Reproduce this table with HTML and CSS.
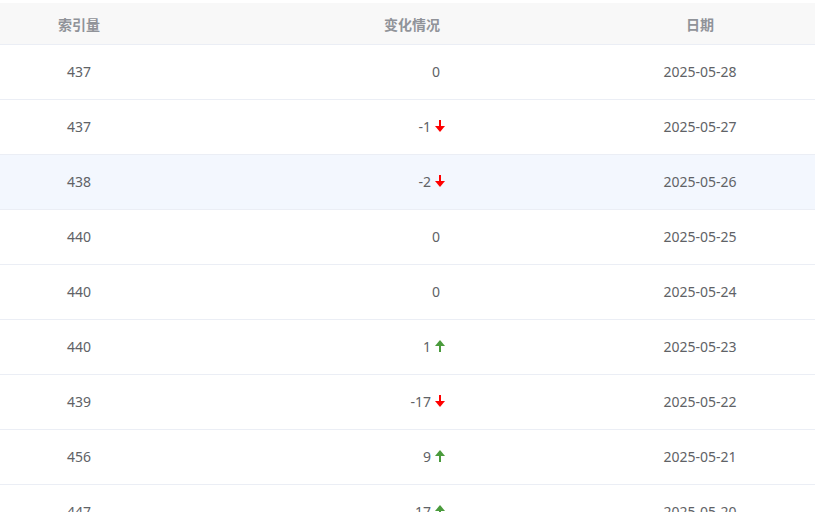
FILE: index.html
```html
<!DOCTYPE html>
<html>
<head>
    <title>索引量记录</title>
    <link rel="stylesheet" href="styles.css">
</head>
<body>
    <div class="table">
        <div class="row head">
            <div class="cell c1">索引量</div>
            <div class="cell c2">变化情况</div>
            <div class="cell c3">日期</div>
        </div>

        <div class="row">
            <div class="cell c1">437</div>
            <div class="cell c2"><span class="zero">0</span></div>
            <div class="cell c3">2025-05-28</div>
        </div>
        <div class="row">
            <div class="cell c1">437</div>
            <div class="cell c2">-1 <svg class="arrow down" viewBox="0 0 10 12"><path d="M5 0v7"/><polygon points="0,6 10,6 5,12"/></svg></div>
            <div class="cell c3">2025-05-27</div>
        </div>
        <div class="row hover">
            <div class="cell c1">438</div>
            <div class="cell c2">-2 <svg class="arrow down" viewBox="0 0 10 12"><path d="M5 0v7"/><polygon points="0,6 10,6 5,12"/></svg></div>
            <div class="cell c3">2025-05-26</div>
        </div>
        <div class="row">
            <div class="cell c1">440</div>
            <div class="cell c2"><span class="zero">0</span></div>
            <div class="cell c3">2025-05-25</div>
        </div>
        <div class="row">
            <div class="cell c1">440</div>
            <div class="cell c2"><span class="zero">0</span></div>
            <div class="cell c3">2025-05-24</div>
        </div>
        <div class="row">
            <div class="cell c1">440</div>
            <div class="cell c2">1 <svg class="arrow up" viewBox="0 0 10 12"><path d="M5 12V5"/><polygon points="0,6 10,6 5,0"/></svg></div>
            <div class="cell c3">2025-05-23</div>
        </div>
        <div class="row">
            <div class="cell c1">439</div>
            <div class="cell c2">-17 <svg class="arrow down" viewBox="0 0 10 12"><path d="M5 0v7"/><polygon points="0,6 10,6 5,12"/></svg></div>
            <div class="cell c3">2025-05-22</div>
        </div>
        <div class="row">
            <div class="cell c1">456</div>
            <div class="cell c2">9 <svg class="arrow up" viewBox="0 0 10 12"><path d="M5 12V5"/><polygon points="0,6 10,6 5,0"/></svg></div>
            <div class="cell c3">2025-05-21</div>
        </div>
        <div class="row">
            <div class="cell c1">447</div>
            <div class="cell c2">17 <svg class="arrow up" viewBox="0 0 10 12"><path d="M5 12V5"/><polygon points="0,6 10,6 5,0"/></svg></div>
            <div class="cell c3">2025-05-20</div>
        </div>
    </div>
</body>
</html>
```

FILE: styles.css
```css
body {
    margin: 0;
    padding: 3px 0 0 0;
    background-color: #fff;
    font-family: "Noto Sans", "Noto Sans CJK SC", sans-serif;
    font-size: 14px;
    color: #606266;
    overflow: hidden;
}

.table {
    width: 815px;
}

.row {
    display: grid;
    grid-template-columns: 158px 427px 230px;
    height: 54px;
    border-bottom: 1px solid #ebeef5;
}

.row.head {
    height: 41px;
    background-color: #f8f8f8;
    color: #909399;
    font-weight: bold;
    font-family: "Noto Sans CJK SC", sans-serif;
}

.row.hover {
    background-color: #f3f7fe;
}

.cell {
    display: flex;
    align-items: center;
    justify-content: center;
    padding-bottom: 2px;
}

.row.head .cell {
    padding-bottom: 0;
}

.row .c2 {
    justify-content: flex-end;
    padding-right: 140px;
}

.row.head .c2 {
    justify-content: center;
    padding: 0 0 0 81px;
}

.zero {
    margin-right: 5px;
}

.arrow {
    width: 10px;
    height: 12px;
    margin-left: 4px;
}

.arrow path {
    stroke-width: 2;
    fill: none;
}

.arrow.down path { stroke: #f00; }
.arrow.down polygon { fill: #f00; }
.arrow.up path { stroke: #4a9b3c; }
.arrow.up polygon { fill: #4a9b3c; }
```
